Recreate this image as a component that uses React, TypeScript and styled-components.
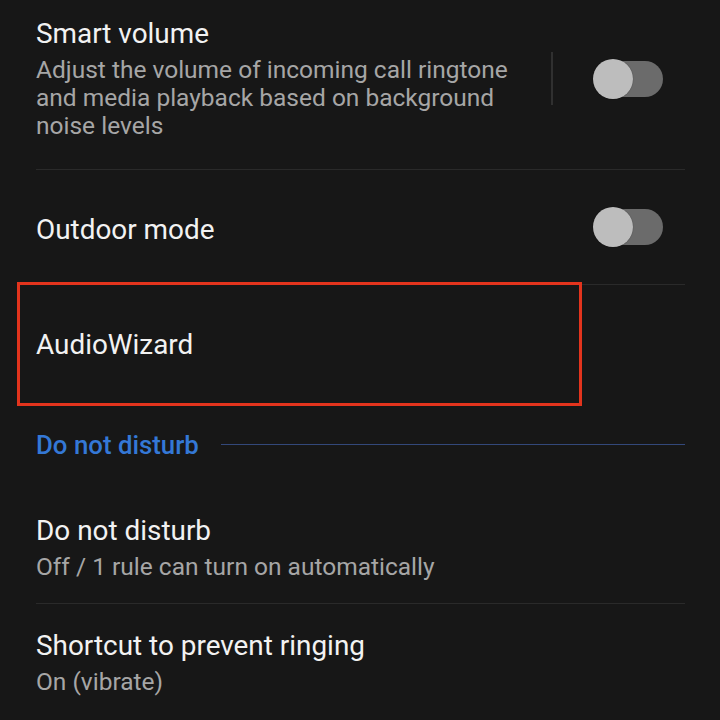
import { createGlobalStyle, styled } from "styled-components";

const GlobalStyle = createGlobalStyle`
  html, body {
    margin: 0;
    background: #171717;
  }
  body {
    font-family: Roboto, "Noto Sans", sans-serif;
    -webkit-font-smoothing: antialiased;
  }
`;

const Screen = styled.div`
  width: 720px;
  height: 720px;
  overflow: hidden;
  background: #171717;
  padding: 0 35px 0 36px;
  box-sizing: border-box;
`;

const Row = styled.div<{ $divider?: boolean; $minHeight?: number; $pad?: string }>`
  position: relative;
  display: flex;
  align-items: center;
  min-height: ${(p) => (p.$minHeight ? `${p.$minHeight}px` : "auto")};
  padding: ${(p) => p.$pad ?? "0"};
  border-top: ${(p) => (p.$divider ? "1px solid #2a2a2a" : "none")};
  box-sizing: border-box;
`;

const TextBlock = styled.div<{ $wrapAt?: number; $shift?: number }>`
  flex: 1;
  min-width: 0;
  display: flex;
  flex-direction: column;
  gap: 5px;
  padding-right: ${(p) => p.$wrapAt ?? 0}px;
  padding-top: ${(p) => p.$shift ?? 0}px;
`;

const Title = styled.div`
  color: #f2f2f2;
  font-size: 27.9px;
  line-height: 34px;
  font-weight: 400;
`;

const Summary = styled.div`
  color: #a6a6a6;
  font-size: 24.5px;
  line-height: 28px;
`;

const VDivider = styled.div`
  width: 2px;
  height: 53px;
  background: #303030;
  margin-right: 40px;
`;

const Switch = styled.div`
  position: relative;
  width: 70px;
  height: 40px;
  margin-right: 22px;
  flex-shrink: 0;
`;

const Track = styled.span`
  position: absolute;
  top: 2px;
  bottom: 2px;
  left: 6px;
  right: 0;
  border-radius: 18px;
  background: #6b6b6b;
`;

const Thumb = styled.span`
  position: absolute;
  left: 0;
  top: 0;
  width: 40px;
  height: 40px;
  border-radius: 50%;
  background: #bdbdbd;
  box-shadow: 0 0 1px rgba(0, 0, 0, 0.6);
`;

const Highlight = styled.div`
  position: absolute;
  top: -3px;
  left: -19px;
  width: 565px;
  height: 124px;
  border: 3px solid #e3341d;
  box-sizing: border-box;
  pointer-events: none;
`;

const SectionHeader = styled.div`
  display: flex;
  align-items: center;
  height: 79px;
`;

const SectionLabel = styled.span`
  color: #3478d6;
  font-size: 25.8px;
  font-weight: 500;
  line-height: 34px;
`;

const SectionRule = styled.span`
  flex: 1;
  height: 1px;
  margin-left: 22px;
  background: #33487a;
`;

const Toggle = () => (
  <Switch>
    <Track />
    <Thumb />
  </Switch>
);

export default function App() {
  return (
    <>
      <GlobalStyle />
      <Screen>
        <Row $pad="17px 0 29px">
          <TextBlock $wrapAt={36}>
            <Title>Smart volume</Title>
            <Summary>
              Adjust the volume of incoming call ringtone and media playback
              based on background noise levels
            </Summary>
          </TextBlock>
          <VDivider />
          <Toggle />
        </Row>

        <Row $divider $minHeight={115}>
          <TextBlock $shift={5}>
            <Title>Outdoor mode</Title>
          </TextBlock>
          <Toggle />
        </Row>

        <Row $divider $minHeight={121}>
          <TextBlock>
            <Title>AudioWizard</Title>
          </TextBlock>
          <Highlight />
        </Row>

        <SectionHeader>
          <SectionLabel>Do not disturb</SectionLabel>
          <SectionRule />
        </SectionHeader>

        <Row $pad="30px 0 22px">
          <TextBlock>
            <Title>Do not disturb</Title>
            <Summary>Off / 1 rule can turn on automatically</Summary>
          </TextBlock>
        </Row>

        <Row $divider $pad="25px 0 24px">
          <TextBlock>
            <Title>Shortcut to prevent ringing</Title>
            <Summary>On (vibrate)</Summary>
          </TextBlock>
        </Row>
      </Screen>
    </>
  );
}
